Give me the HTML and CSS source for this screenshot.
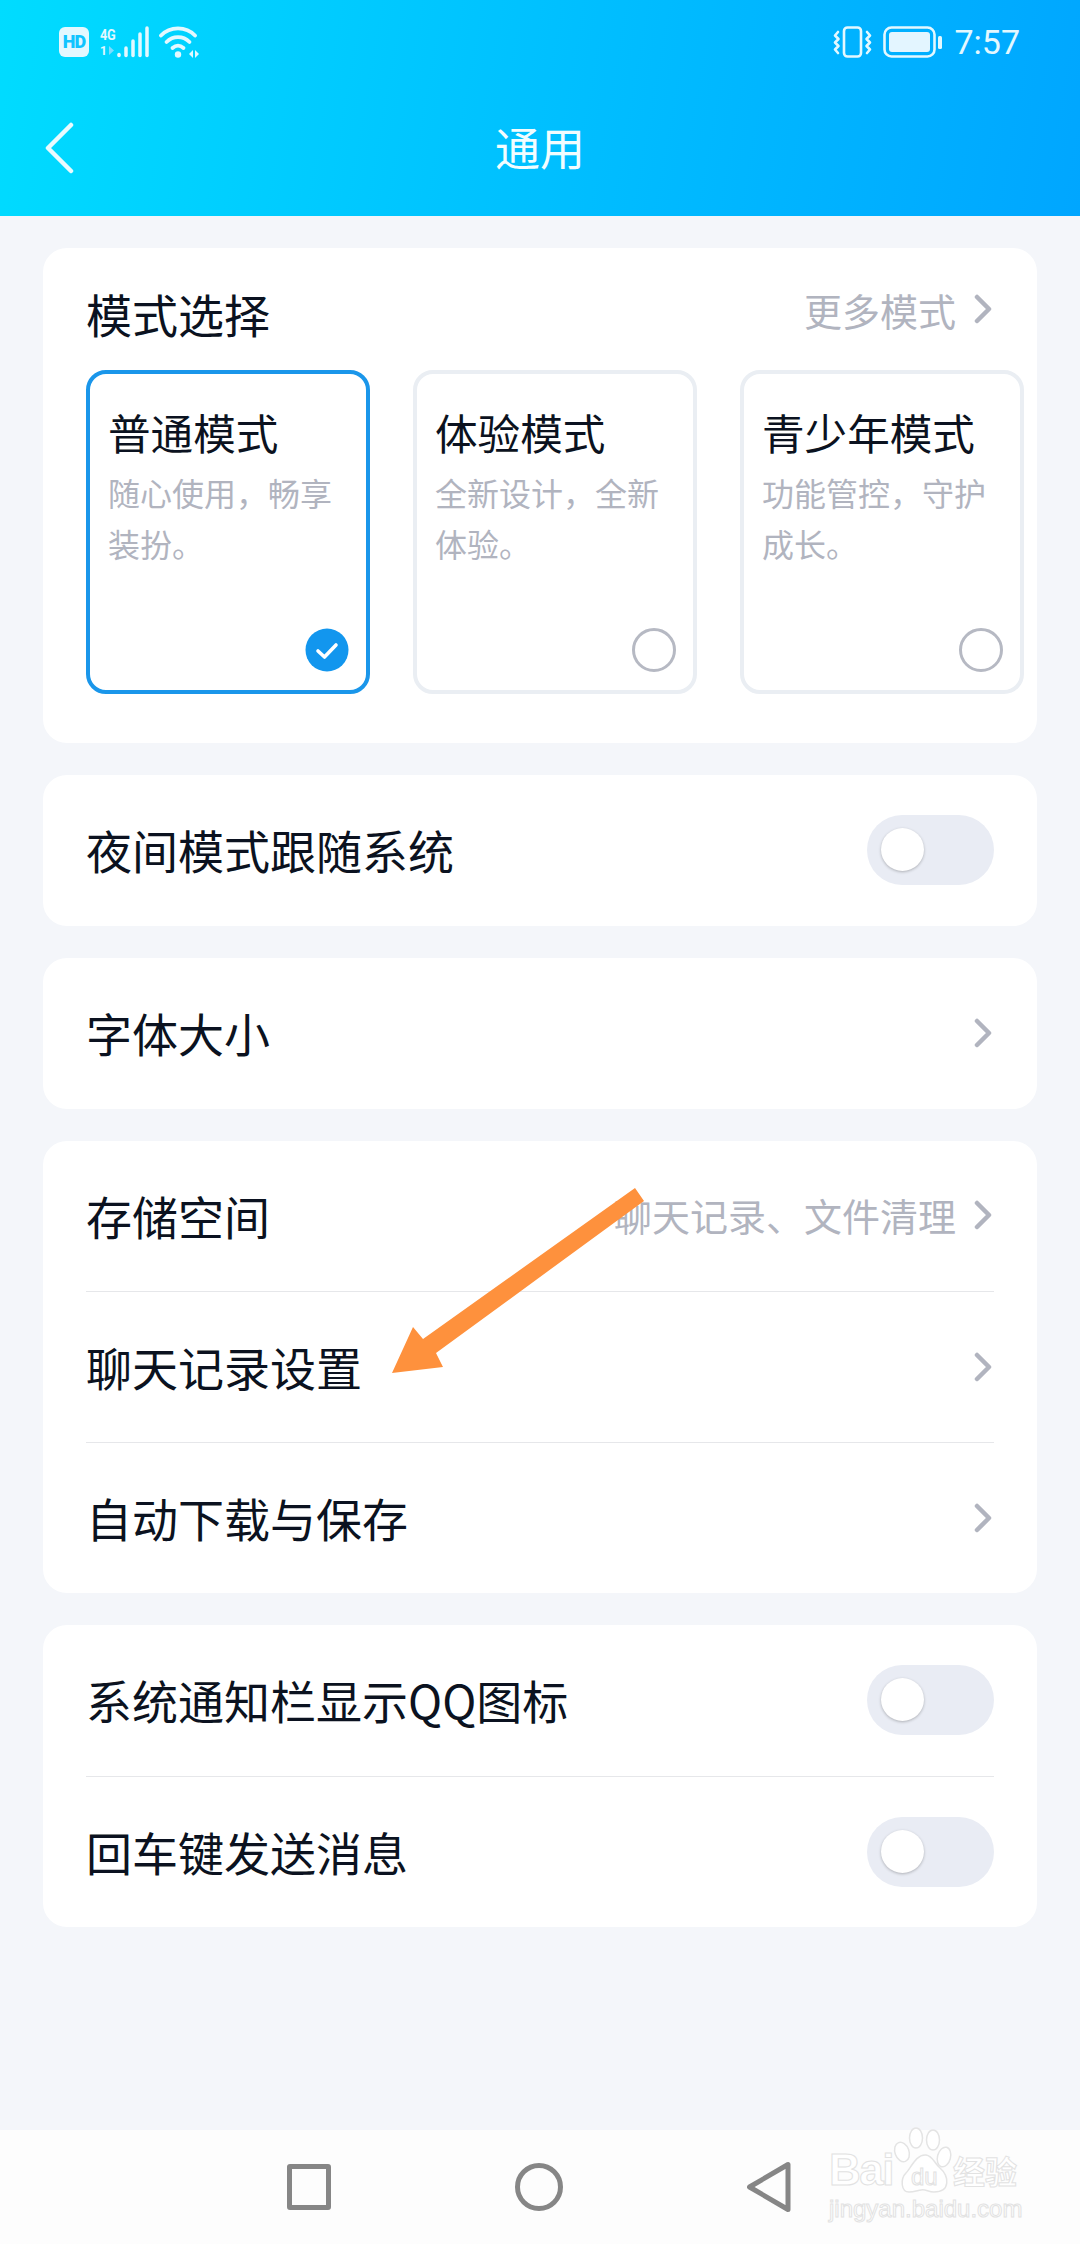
FILE: index.html
```html
<!DOCTYPE html>
<html lang="zh-CN">
<head>
    <meta charset="UTF-8">
    <meta name="viewport" content="width=device-width, initial-scale=1.0">
    <title>通用</title>
    <link rel="stylesheet" href="styles.css">
</head>
<body>

<header class="top">
    <div class="status-bar">
        <div class="status-left">
            <span class="hd">HD</span>
            <div class="net">
                <span class="net-type">4G</span>
                <span class="net-sub">1<svg width="7" height="9" viewBox="0 0 7 9"><path d="M1 0v9l5-4.500z" fill="#7fdcff"/></svg></span>
            </div>
            <svg class="signal" width="34" height="32" viewBox="0 0 34 32">
                <g fill="none" stroke="#e3f8ff" stroke-linecap="round">
                    <path d="M3 28.500v1" stroke-width="3.500"/>
                    <path d="M10 22v7.500" stroke-width="3.500"/>
                    <path d="M17 15v14.500" stroke-width="3.500"/>
                    <path d="M24 8v21.500" stroke-width="3.500"/>
                    <path d="M31 2v27.500" stroke-width="3.500"/>
                </g>
            </svg>
            <svg class="wifi" width="40" height="34" viewBox="0 0 40 34">
                <g fill="none" stroke="#e3f8ff" stroke-width="3.800" stroke-linecap="round">
                    <path d="M2 10.500C11 1 27 1 36 10.500"/>
                    <path d="M7.500 17C14 10.500 24 10.500 30.500 17"/>
                    <path d="M13.500 23C17 20 21 20 24.500 23"/>
                </g>
                <circle cx="19" cy="29.500" r="3.200" fill="#e3f8ff"/>
                <path d="M30 29l4-4v8z" fill="#e3f8ff"/>
                <path d="M36 25l4 4-4 4z" fill="#e3f8ff"/>
            </svg>
        </div>
        <div class="status-right">
            <svg width="39" height="32" viewBox="0 0 39 32">
                <rect x="11" y="1.500" width="17" height="29" rx="3.500" fill="none" stroke="#e3f8ff" stroke-width="2.600"/>
                <g fill="none" stroke="#e3f8ff" stroke-width="2.600" stroke-linecap="round" stroke-linejoin="round">
                    <path d="M5 6L2 9.500l3.500 3.500L2 16.500 5.500 20 2 23.500 5 27"/>
                    <path d="M34 6l3 3.500-3.500 3.500 3.500 3.500-3.500 3.500 3.500 3.500-3 3.500"/>
                </g>
            </svg>
            <svg width="60" height="32" viewBox="0 0 60 32">
                <rect x="1.500" y="1.500" width="50" height="29" rx="7" fill="none" stroke="#e3f8ff" stroke-width="2.600"/>
                <rect x="6" y="6" width="41" height="20" rx="3" fill="#e3f5ff"/>
                <rect x="55" y="10" width="4" height="13" rx="1.500" fill="#e3f8ff"/>
            </svg>
            <span class="time">7:57</span>
        </div>
    </div>
    <div class="title-bar">
        <svg class="back" width="30" height="52" viewBox="0 0 30 52">
            <path d="M26 3L3 26l23 23" fill="none" stroke="#e9fbff" stroke-width="4.500" stroke-linecap="round" stroke-linejoin="round"/>
        </svg>
        <h1>通用</h1>
    </div>
</header>

<main class="content">
    <section class="card mode-card">
        <div class="mode-head">
            <span class="row-label">模式选择</span>
            <span class="row-extra mode-more">更多模式
                <svg class="chev" width="18" height="30" viewBox="0 0 18 30"><path d="M3 3l12 12L3 27" /></svg>
            </span>
        </div>
        <div class="mode-list">
            <div class="mode mode-on">
                <div class="mode-name">普通模式</div>
                <div class="mode-desc">随心使用，畅享<br>装扮。</div>
                <svg class="mode-check" width="44" height="44" viewBox="0 0 44 44">
                    <circle cx="22" cy="22" r="21.500" fill="#1296ee"/>
                    <path d="M13 23l6.500 6L31 17" fill="none" stroke="#fff" stroke-width="3.600" stroke-linecap="round" stroke-linejoin="round"/>
                </svg>
            </div>
            <div class="mode">
                <div class="mode-name">体验模式</div>
                <div class="mode-desc">全新设计，全新<br>体验。</div>
                <span class="mode-radio"></span>
            </div>
            <div class="mode">
                <div class="mode-name">青少年模式</div>
                <div class="mode-desc">功能管控，守护<br>成长。</div>
                <span class="mode-radio"></span>
            </div>
        </div>
    </section>

    <section class="card">
        <div class="row">
            <span class="row-label">夜间模式跟随系统</span>
            <span class="switch"><span class="knob"></span></span>
        </div>
    </section>

    <section class="card">
        <div class="row">
            <span class="row-label">字体大小</span>
            <svg class="chev" width="18" height="30" viewBox="0 0 18 30"><path d="M3 3l12 12L3 27" /></svg>
        </div>
    </section>

    <section class="card">
        <div class="row">
            <span class="row-label">存储空间</span>
            <span class="row-extra">聊天记录、文件清理
                <svg class="chev" width="18" height="30" viewBox="0 0 18 30"><path d="M3 3l12 12L3 27" /></svg>
            </span>
        </div>
        <div class="row">
            <span class="row-label">聊天记录设置</span>
            <svg class="chev" width="18" height="30" viewBox="0 0 18 30"><path d="M3 3l12 12L3 27" /></svg>
        </div>
        <div class="row">
            <span class="row-label">自动下载与保存</span>
            <svg class="chev" width="18" height="30" viewBox="0 0 18 30"><path d="M3 3l12 12L3 27" /></svg>
        </div>
    </section>

    <section class="card">
        <div class="row">
            <span class="row-label">系统通知栏显示QQ图标</span>
            <span class="switch"><span class="knob"></span></span>
        </div>
        <div class="row">
            <span class="row-label">回车键发送消息</span>
            <span class="switch"><span class="knob"></span></span>
        </div>
    </section>
</main>

<nav class="nav-bar">
    <span class="nav-square"></span>
    <span class="nav-circle"></span>
    <svg width="44" height="52" viewBox="0 0 44 52">
        <path d="M41 3.500v45L2.500 26z" fill="none" stroke="#868686" stroke-width="5" stroke-linejoin="round"/>
    </svg>
    <div class="watermark">
        <div class="wm-top">
            <span class="wm-bai">Bai</span>
            <span class="wm-paw">
                <svg width="60" height="68" viewBox="0 0 60 68">
                    <g fill="#fff" stroke="#e4e4e4" stroke-width="1.500">
                        <ellipse cx="9" cy="25" rx="7" ry="10" transform="rotate(-20 9 25)"/>
                        <ellipse cx="23" cy="11" rx="6.500" ry="10"/>
                        <ellipse cx="40" cy="13" rx="6.500" ry="10"/>
                        <ellipse cx="51" cy="30" rx="6.500" ry="10" transform="rotate(15 51 30)"/>
                        <path d="M33 28c7 1 8 8 14 13 9 8 11 24-6 24-6 0-8-3-13-2-5 1-8 2-12 2-8 0-9-13-3-19 5-5 10-19 20-18z"/>
                    </g>
                </svg>
                <span class="wm-du">du</span>
            </span>
            <span class="wm-cn">经验</span>
        </div>
        <div class="wm-url">jingyan.baidu.com</div>
    </div>
</nav>

<svg class="arrow" width="260" height="190" viewBox="0 0 260 190">
    <path d="M243 0L252 13 44 165 51 179 0 185 21 139 31 151z" fill="#fe913d"/>
</svg>

</body>
</html>
```
FILE: styles.css
```css
html, body {
    margin: 0;
    padding: 0;
}
body {
    position: relative;
    width: 1080px;
    height: 2244px;
    display: flex;
    flex-direction: column;
    overflow: hidden;
    background-color: #f4f6fa;
    font-family: "Noto Sans CJK SC", "Noto Sans", sans-serif;
    color: #0b1220;
}

/* top blue area */
.top {
    height: 216px;
    flex: none;
    background: linear-gradient(100deg, #00dcff 0%, #00c0ff 50%, #00a6ff 100%);
    color: #fff;
}
.status-bar {
    height: 80px;
    padding: 4px 60px 0 59px;
    box-sizing: border-box;
    display: flex;
    justify-content: space-between;
    align-items: center;
}
.status-left, .status-right {
    display: flex;
    align-items: center;
}
.status-right {
    gap: 11px;
}
.hd {
    width: 30px;
    height: 30px;
    border-radius: 6px;
    background-color: #e3f8ff;
    color: #10c4ff;
    font-family: "Roboto", sans-serif;
    font-weight: 900;
    font-size: 18px;
    line-height: 30px;
    letter-spacing: -1px;
    text-align: center;
}
.net {
    width: 18px;
    margin-left: 11px;
    color: #e3f8ff;
    font-family: "Roboto", sans-serif;
    font-weight: 700;
    line-height: 1;
}
.net-type {
    display: block;
    font-size: 15px;
    letter-spacing: -0.5px;
    transform: scaleX(0.85);
    transform-origin: left;
}
.net-sub {
    display: flex;
    align-items: center;
    gap: 1px;
    margin-top: 2px;
    font-size: 12px;
}
.signal {
    margin-left: -2px;
}
.wifi {
    margin-left: 9px;
}
.time {
    font-family: "Roboto", sans-serif;
    font-size: 34px;
    color: #e3f8ff;
}
.title-bar {
    position: relative;
    height: 136px;
    display: flex;
    align-items: center;
    justify-content: center;
}
.title-bar h1 {
    margin: 0 0 4px;
    font-size: 45px;
    font-weight: 400;
    color: #f2fdff;
}
.back {
    position: absolute;
    left: 45px;
    top: 42px;
}

/* cards */
.content {
    flex: 1;
    padding: 32px 43px 0;
    display: flex;
    flex-direction: column;
    gap: 32px;
}
.card {
    background-color: #fff;
    border-radius: 24px;
    overflow: hidden;
}
.row {
    height: 150.8px;
    margin: 0 43px;
    display: flex;
    align-items: center;
    justify-content: space-between;
    box-sizing: border-box;
}
.row + .row {
    border-top: 1px solid #e6e7ea;
}
.row-label {
    font-size: 46px;
    line-height: 60px;
    margin-bottom: 2px;
}
.row-extra {
    display: flex;
    align-items: center;
    gap: 18px;
    font-size: 38px;
    color: #b1b4bf;
    margin-top: -2px;
}
.chev {
    flex: none;
    margin-right: 2px;
}
.chev path {
    fill: none;
    stroke: #b1b4bf;
    stroke-width: 4.5px;
    stroke-linecap: round;
    stroke-linejoin: round;
}

/* mode chooser */
.mode-card {
    height: 495px;
    box-sizing: border-box;
}
.mode-head {
    height: 122px;
    margin: 0 43px;
    padding-top: 10px;
    box-sizing: border-box;
    display: flex;
    align-items: center;
    justify-content: space-between;
}
.mode-more {
    margin-top: -10px;
}
.mode-list {
    display: flex;
    gap: 43px;
    padding-left: 43px;
}
.mode {
    flex: none;
    width: 284px;
    height: 324px;
    padding: 29px 17px 18px 18px;
    box-sizing: border-box;
    display: flex;
    flex-direction: column;
    border: 4px solid #eaeef3;
    border-radius: 20px;
}
.mode-on {
    border-color: #1a96ea;
}
.mode-name {
    font-size: 42.6px;
    line-height: 58px;
    white-space: nowrap;
}
.mode-desc {
    margin-top: 6px;
    font-size: 32px;
    line-height: 51px;
    color: #b1b4bf;
    white-space: nowrap;
}
.mode-check {
    margin-top: auto;
    align-self: flex-end;
}
.mode-radio {
    width: 44px;
    height: 44px;
    margin-top: auto;
    align-self: flex-end;
    box-sizing: border-box;
    border: 3px solid #b6b9c3;
    border-radius: 50%;
}

/* toggle */
.switch {
    width: 127px;
    height: 70px;
    padding: 13px 14px;
    box-sizing: border-box;
    border-radius: 35px;
    background-color: #e9ecf4;
}
.knob {
    display: block;
    width: 43px;
    height: 43px;
    border-radius: 50%;
    background-color: #fff;
    box-shadow: 0 1px 3px rgba(0, 0, 0, 0.25);
}

/* bottom nav */
.nav-bar {
    position: relative;
    height: 114px;
    flex: none;
    padding-right: 3px;
    box-sizing: border-box;
    display: flex;
    align-items: center;
    justify-content: center;
    gap: 184px;
    background-color: #fdfdfd;
}
.nav-square {
    width: 44px;
    height: 46px;
    box-sizing: border-box;
    border: 5px solid #868686;
    border-radius: 3px;
}
.nav-circle {
    width: 48px;
    height: 48px;
    box-sizing: border-box;
    border: 5px solid #868686;
    border-radius: 50%;
}

/* watermark */
.watermark {
    position: absolute;
    left: 829px;
    top: -3px;
    width: 200px;
    color: #fff;
    font-family: "Liberation Sans", sans-serif;
    -webkit-text-stroke: 1px #e2e2e2;
}
.wm-top {
    display: flex;
    align-items: flex-end;
    height: 68px;
}
.wm-bai {
    width: 64px;
    font-size: 44px;
    font-weight: 700;
    line-height: 46px;
    letter-spacing: -1.5px;
    margin-bottom: 2px;
}
.wm-paw {
    position: relative;
    width: 60px;
    height: 68px;
}
.wm-paw svg {
    display: block;
}
.wm-du {
    position: absolute;
    left: 18px;
    top: 35px;
    font-size: 24px;
    line-height: 30px;
}
.wm-cn {
    margin-bottom: 2px;
    font-family: "Noto Sans CJK SC", sans-serif;
    font-size: 32px;
    font-weight: 700;
    line-height: 46px;
    white-space: nowrap;
}
.wm-url {
    margin-top: 1px;
    font-size: 24px;
    line-height: 26px;
    white-space: nowrap;
}

/* the annotation drawn over the screenshot */
.arrow {
    position: absolute;
    left: 392px;
    top: 1188px;
}
```
